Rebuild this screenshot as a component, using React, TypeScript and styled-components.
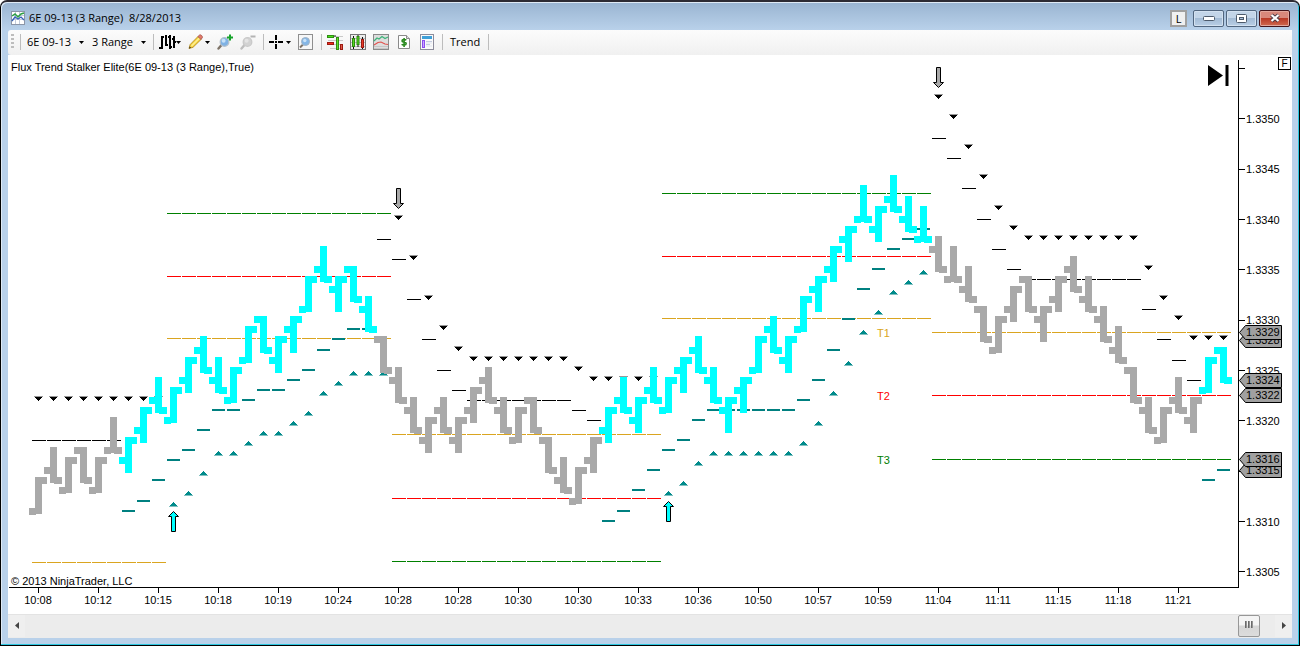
import React from 'react';
import styled, { createGlobalStyle, css } from 'styled-components';

const GlobalStyle = createGlobalStyle`
  * { box-sizing: border-box; }
  body { margin: 0; background: #fff; font-family: "Open Sans", "Segoe UI", sans-serif; }
`;

/* ---------- chart data: prices are ticks above 1.3300 ---------- */

type Bar = [open: number, high: number, close: number];

const RANGE = 3;
const STEP = 15;
const FIRST = 30;
const PLOT_W = 1230;
const PLOT_H = 533;

const BARS: Bar[] = [
  [11, 14, 14], [15, 17, 14], [13, 16, 16], [17, 17, 14], [13, 16, 16], [17, 20, 17], [16, 18, 18], [19, 21, 21],
  [22, 24, 21], [20, 23, 23], [24, 26, 26], [27, 28, 25], [24, 26, 23], [22, 25, 25], [26, 29, 29], [30, 30, 27],
  [26, 28, 28], [29, 30, 30], [31, 34, 34], [35, 37, 34], [33, 34, 34], [35, 35, 32], [31, 32, 29], [28, 28, 25],
  [24, 25, 22], [21, 22, 19], [18, 20, 20], [21, 22, 19], [18, 20, 20], [21, 23, 23], [24, 25, 22], [21, 22, 19],
  [18, 21, 21], [22, 22, 19], [18, 18, 15], [14, 16, 13], [12, 15, 15], [16, 18, 18], [19, 21, 21], [22, 24, 21],
  [20, 22, 22], [23, 25, 22], [21, 24, 24], [25, 26, 26], [27, 28, 25], [24, 25, 22], [21, 22, 22], [23, 24, 24],
  [25, 28, 28], [29, 30, 27], [26, 28, 28], [29, 32, 32], [33, 34, 34], [35, 37, 37], [38, 39, 39], [40, 43, 40],
  [39, 41, 41], [42, 44, 41], [40, 42, 39], [38, 41, 38], [37, 38, 35], [34, 37, 34], [33, 35, 32], [31, 31, 28],
  [27, 30, 30], [31, 33, 33], [34, 34, 31], [30, 31, 31], [32, 34, 34], [35, 36, 33], [32, 34, 31], [30, 31, 28],
  [27, 29, 26], [25, 25, 22], [21, 22, 19], [18, 21, 21], [22, 24, 21], [20, 22, 22], [23, 26, 26], [27, 27, 24],
];

const isUp = (i: number) => (i >= 6 && i <= 22) || (i >= 38 && i <= 59) || i >= 78;

type Run = { from: number; values: number[] };

const fill = (n: number, v: number): number[] => Array.from({ length: n }, () => v);

const SHORT_DASHES: Run[] = [
  { from: 0, values: fill(6, 18) },
  { from: 23, values: [38, 36, 32, 28, 25, 23, ...fill(7, 22), 21, 20] },
  { from: 60, values: [48, 46, 43, 40, 37, 35, ...fill(8, 34), 31, 28, 26, 24] },
];

const LONG_DASHES: Run[] = [
  { from: 6, values: [11, 12, 14, 16, 17, 19, 21, 21, 22, 23, 23, 24, 25, 27, 28, 29, 29] },
  { from: 38, values: [10, 11, 13, 15, 17, 18, 20, ...fill(6, 21), 22, 24, 27, 30, 33, 35, 37, 38, 39] },
  { from: 78, values: [14, 15] },
];

const DOWN_MARKS: Run[] = [
  { from: 0, values: fill(9, 22) },
  { from: 24, values: [40, 36, 32, 29, 27, ...fill(7, 26), 25, ...fill(5, 24)] },
  { from: 60, values: [52, 50, 47, 44, 41, 39, ...fill(8, 38), 35, 32, 30, 28, 28, 28] },
];

const UP_MARKS: Run[] = [
  { from: 9, values: [12, 13, 15, 17, 17, 18, 19, 19, 20, 21, 23, 24, 25, 25, 25] },
  { from: 42, values: [13, 14, 16, ...fill(6, 17), 18, 20, 23, 26, 29, 31, 33, 34, 35] },
];

const GOLD = '#daa520';
const RED = '#ff0000';
const GREEN = '#008000';

const LEVELS = [
  { from: 0, to: 8, y: 507, color: GOLD },
  { from: 9, to: 23, y: 158, color: GREEN },
  { from: 9, to: 23, y: 221, color: RED },
  { from: 9, to: 23, y: 283, color: GOLD },
  { from: 24, to: 41, y: 379, color: GOLD },
  { from: 24, to: 41, y: 443, color: RED },
  { from: 24, to: 41, y: 506, color: GREEN },
  { from: 42, to: 59, y: 138, color: GREEN },
  { from: 42, to: 59, y: 201, color: RED },
  { from: 42, to: 59, y: 263, color: GOLD },
  { from: 60, to: 79, y: 277, color: GOLD },
  { from: 60, to: 79, y: 340, color: RED },
  { from: 60, to: 79, y: 404, color: GREEN },
];

const TIMES = [
  '10:08', '10:12', '10:15', '10:18', '10:19', '10:24', '10:28', '10:28', '10:30', '10:30',
  '10:33', '10:36', '10:50', '10:57', '10:59', '11:04', '11:11', '11:15', '11:18', '11:21',
];

const PRICES = ['1.3350', '1.3345', '1.3340', '1.3335', '1.3330', '1.3325', '1.3320', '1.3315', '1.3310', '1.3305'];

const TAGS = [
  { price: '1.3328', y: 285 },
  { price: '1.3329', y: 277 },
  { price: '1.3324', y: 325 },
  { price: '1.3322', y: 340 },
  { price: '1.3315', y: 415 },
  { price: '1.3316', y: 404 },
];

const TARGETS = [
  { name: 'T1', y: 278, color: GOLD },
  { name: 'T2', y: 341, color: RED },
  { name: 'T3', y: 405, color: GREEN },
];

const xOf = (i: number) => FIRST + i * STEP;
const topOf = (t: number) => Math.round(60 + (50 - t) * 10.067);
const each = (runs: Run[], draw: (x: number, top: number, key: string) => React.ReactNode) =>
  runs.flatMap((r) => r.values.map((v, k) => draw(xOf(r.from + k), topOf(v), `${r.from + k}`)));

/* ---------- window frame ---------- */

const Frame = styled.main`
  min-height: 100vh;
  display: flex;
  flex-direction: column;
  padding: 0 7px 7px;
  border: 1px solid #000;
  border-top: 2px solid #2d2b33;
  border-radius: 7px 7px 0 0;
  background: linear-gradient(#99b4d1, #b9d1ea 28px);
  box-shadow: inset -1px -1px 0 #2cc7e0, inset 1px 1px 0 #dfeaf5;
`;

const TitleBar = styled.header`
  display: flex;
  align-items: center;
  height: 28px;
  padding: 4px 2px 0 3px;
`;

const Title = styled.h1`
  flex: 1;
  margin: 0 0 0 4px;
  font-size: 11px;
  line-height: 16px;
  font-weight: 400;
  white-space: pre;
  color: #000;
`;

const LinkButton = styled.button`
  width: 17px;
  height: 17px;
  margin-right: 4px;
  padding: 0;
  border: 2px solid #a0a0a0;
  background: #f0f0f0;
  color: #000;
  font: 11px/13px "Open Sans", sans-serif;
`;

const FrameButton = styled.button<{ $close?: boolean }>`
  display: flex;
  align-items: center;
  justify-content: center;
  width: 31px;
  height: 17px;
  margin-left: 2px;
  padding: 0;
  border: 1px solid ${(p) => (p.$close ? '#43141a' : '#51667f')};
  border-radius: 2px;
  box-shadow: inset 0 0 0 1px ${(p) => (p.$close ? '#e2a79c' : '#d3e1f0')};
  background: ${(p) =>
    p.$close
      ? 'linear-gradient(#d8887b 0 45%, #b93a26 50%, #cf6a50)'
      : 'linear-gradient(#c3d5e8 0 45%, #a3bbd5 50%, #b9cfe6)'};
`;

/* ---------- toolbar ---------- */

const Toolbar = styled.nav`
  display: flex;
  align-items: center;
  height: 25px;
  padding: 0 0 1px 3px;
  border-radius: 3px 0 0 3px;
  background: linear-gradient(#fcfcfc, #f0f0f0);
`;

const Grip = styled.span`
  width: 3px;
  height: 16px;
  margin-right: 6px;
  background: repeating-linear-gradient(#bdbdbd 0 2px, transparent 2px 4px);
`;

const Group = styled.div<{ $first?: boolean }>`
  display: flex;
  align-items: center;
  gap: 7px;
  height: 16px;
  padding: 0 7px 0 5px;
  border-right: 1px solid #bdbdbd;
  ${(p) => p.$first && css`
    gap: 8px;
    padding-left: 6px;
    border-left: 1px solid #bdbdbd;
  `}
`;

const Picker = styled.label`
  display: flex;
  align-items: center;
  gap: 6px;
`;

const PickerSelect = styled.select<{ $width: number }>`
  appearance: none;
  width: ${(p) => p.$width}px;
  height: 16px;
  padding: 0;
  border: 0;
  outline: 0;
  background: none;
  color: #000;
  font: 11px/16px "Open Sans", sans-serif;
`;

const Tool = styled.button`
  display: flex;
  align-items: center;
  padding: 0;
  border: 0;
  background: none;
  color: #000;
  font: 11px/16px "Open Sans", sans-serif;
`;

const TextTool = styled(Tool)`
  padding: 0 1px 0 2px;
`;

const Caret = () => (
  <svg width="5" height="3" viewBox="0 0 5 3" aria-hidden="true">
    <path d="M0 0h5L2.500 3z" fill="#000" />
  </svg>
);

/* ---------- chart ---------- */

const ChartArea = styled.section`
  position: relative;
  display: grid;
  grid-template-columns: 1fr 54px;
  grid-template-rows: auto 26px;
  flex: 1;
  background: #fff;
  color: #000;
  font: 11px/14px "Liberation Sans", Arial, sans-serif;
`;

const Plot = styled.div`
  position: relative;
  display: grid;
  min-width: 0;
  > * { grid-area: 1 / 1; }
`;

const PlotSvg = styled.svg`
  display: block;
  width: 100%;
  height: ${PLOT_H}px;
`;

const Caption = styled.p<{ $bottom?: boolean }>`
  margin: 0;
  padding: ${(p) => (p.$bottom ? '0 0 0 3px' : '5px 0 0 3px')};
  align-self: ${(p) => (p.$bottom ? 'end' : 'start')};
`;

const TargetLabel = styled.span<{ $y: number; $color: string }>`
  position: absolute;
  left: ${(869 / PLOT_W) * 100}%;
  top: ${(p) => p.$y - 7}px;
  color: ${(p) => p.$color};
`;

const PriceAxis = styled.aside`
  position: relative;
`;

const PriceLines = styled.svg`
  display: block;
`;

const PriceList = styled.ul`
  position: absolute;
  inset: 57px 0 9px 8px;
  display: flex;
  flex-direction: column;
  justify-content: space-between;
  margin: 0;
  padding: 0;
  list-style: none;
`;

const PriceTag = styled.div<{ $y: number }>`
  position: absolute;
  left: 1px;
  top: ${(p) => p.$y - 7}px;
  display: grid;
  width: 43px;
  height: 15px;
  > * { grid-area: 1 / 1; }
  > span { padding: 1px 0 0 7px; line-height: 13px; }
`;

const TimeAxis = styled.div`
  display: flex;
`;

const TimeCell = styled.span`
  flex: 60 1 0;
  display: flex;
  flex-direction: column;
  align-items: center;
  &::before { content: ""; width: 1px; height: 5px; background: #000; }
`;

const TimeRest = styled.span`
  flex: 30 1 0;
`;

const FixedButton = styled.button`
  position: absolute;
  top: 2px;
  right: 1px;
  width: 13px;
  height: 13px;
  padding: 0;
  border: 1px solid #000;
  background: #fff;
  color: #000;
  font: 10px/11px "Liberation Sans", Arial, sans-serif;
`;

const SkipButton = styled.button`
  position: absolute;
  top: 10px;
  right: 63px;
  padding: 0;
  border: 0;
  background: none;
  line-height: 0;
`;

/* ---------- scroll bar ---------- */

const ScrollBar = styled.footer`
  display: flex;
  align-items: flex-start;
  justify-content: space-between;
  height: 24px;
  border-top: 1px solid #e3e3e3;
  background: #ececec;
`;

const ScrollArrow = styled.button`
  display: flex;
  align-items: center;
  justify-content: center;
  width: 17px;
  height: 22px;
  padding: 0 0 1px;
  border: 0;
  background: #efefef;
`;

const ScrollEnd = styled.div`
  display: flex;
  gap: 15px;
`;

const Thumb = styled.button`
  display: flex;
  align-items: center;
  justify-content: center;
  gap: 1px;
  width: 22px;
  height: 22px;
  padding: 0 0 3px;
  border: 1px solid #979797;
  border-radius: 2px;
  background: linear-gradient(#f4f4f4 0 45%, #d6d6d6 50%, #dcdcdc);
`;

const Ridge = styled.i`
  width: 2px;
  height: 7px;
  background: linear-gradient(90deg, #555, #aaa);
`;

/* ---------- icons ---------- */

const TitleIcon = () => (
  <svg width="14" height="14" viewBox="0 0 14 14" aria-hidden="true">
    <rect x=".5" y=".5" width="13" height="13" fill="#fff" stroke="#8c96a8" />
    <path d="M4.500 1v12M8.500 1v12M1 4.500h12M1 8.500h12" stroke="#c3ccdd" />
    <path d="M1 10l3-4 3 2 3-2 3 3" fill="none" stroke="#3a62b8" strokeWidth="1.300" />
    <path d="M1 5l3-2 3 3 3-3 3-1" fill="none" stroke="#2da043" strokeWidth="1.500" />
  </svg>
);

const BarsIcon = () => (
  <svg width="17" height="16" viewBox="1 0 17 16" shapeRendering="crispEdges" aria-hidden="true">
    <path d="M3 2h2v13H3zM1 13h2v2H1zM5 2h1v2H5zM7 1h2v11H7zM9 10h1v2H9zM11 1h2v14h-2zM10 2h1v2h-1zM13 12h1v2h-1zM15 2h2v12h-2zM14 4h1v2h-1zM17 7h1v2h-1z" fill="#000" />
  </svg>
);

const PencilIcon = () => (
  <svg width="17" height="16" viewBox="0 0 17 16" aria-hidden="true">
    <path d="M1 14.500l1.200-4L10 2.500l3 3L5 13.300z" fill="#f7d644" stroke="#b58a1c" strokeWidth=".9" />
    <path d="M3.500 12L11.500 4" stroke="#fdf09a" strokeWidth="1.200" />
    <path d="M10 2.500l1.600-1.500q1-.5 2 .5t.8 2L13 5.500z" fill="#e27a6c" stroke="#a24f45" strokeWidth=".8" />
    <path d="M1 14.500l.7-2 1.400 1.300z" fill="#333" />
  </svg>
);

const ZoomIcon = ({ minus }: { minus?: boolean }) => (
  <svg width="16" height="16" viewBox="0 0 16 16" aria-hidden="true">
    <path d="M4.500 11L1.500 14.500" stroke={minus ? '#bdbdbd' : '#7f7468'} strokeWidth="2.400" strokeLinecap="round" />
    <circle cx="7.500" cy="8" r="4.300" fill={minus ? '#d2d2d2' : '#7fb2e4'} stroke={minus ? '#c9c9c9' : '#b3c0cd'} strokeWidth="1.300" />
    <circle cx="6.600" cy="6.800" r="2" fill={minus ? '#e4e4e4' : '#c6e1f8'} />
    {minus ? <path d="M10.500 2.500h5" stroke="#b4b4b4" strokeWidth="2" /> : <path d="M10 3.500h6M13 .5v6" stroke="#16a32a" strokeWidth="2" />}
  </svg>
);

const CrossIcon = () => (
  <svg width="17" height="16" viewBox="2 0 17 16" shapeRendering="crispEdges" aria-hidden="true">
    <path d="M8 1h2v5H8zM8 10h2v5H8zM2 7h5v2H2zM11 7h5v2h-5zM8 7h2v2H8z" fill="#000" />
  </svg>
);

const ZoomBoxIcon = () => (
  <svg width="16" height="16" viewBox="1 0 16 16" aria-hidden="true">
    <rect x="1.500" y=".5" width="14" height="15" fill="#f7f7f7" stroke="#8f8f8f" />
    <path d="M6 10.500L3 13.500" stroke="#7f7468" strokeWidth="2" />
    <circle cx="8.500" cy="7.500" r="4" fill="#84b6e6" stroke="#a0b3c6" />
    <circle cx="7.800" cy="6.500" r="1.700" fill="#c8e2f8" />
  </svg>
);

const DepthIcon = () => (
  <svg width="16" height="16" viewBox="1 0 16 16" aria-hidden="true">
    <path d="M2 2.500h15M2 6.500h15M2 10.500h15M4 14.500h12" stroke="#c9c9c9" />
    <rect x="1.500" y="1.500" width="6" height="2" fill="#4be01c" stroke="#2f8f12" />
    <rect x="1.500" y="8.500" width="6" height="2" fill="#f02c1c" stroke="#9c1a10" />
    <path d="M8 2h2" stroke="#222" />
    <rect x="10.500" y="3.500" width="2" height="12" fill="#5be02c" stroke="#2f8f12" />
    <rect x="14.500" y="10.500" width="2" height="5" fill="#e05848" stroke="#9c1a10" />
  </svg>
);

const CandlesIcon = () => (
  <svg width="16" height="16" viewBox="1 0 16 16" aria-hidden="true">
    <rect x="1.500" y=".5" width="15" height="15" fill="#ececec" stroke="#777" />
    <path d="M2 4.500h14M2 8.500h14M2 12.500h14" stroke="#bbb" />
    <path d="M4.500 2v13M9 1v12M13.500 3v12" stroke="#111" />
    <rect x="3.500" y="4.500" width="2" height="8" fill="#55d81e" stroke="#2d8a10" />
    <rect x="8" y="2.500" width="2" height="8" fill="#55d81e" stroke="#2d8a10" />
    <rect x="12.500" y="5.500" width="2" height="8" fill="#e83a28" stroke="#9c1a10" />
  </svg>
);

const LinesIcon = () => (
  <svg width="16" height="16" viewBox="1 0 16 16" aria-hidden="true">
    <rect x="1.500" y=".5" width="15" height="15" fill="#dedede" stroke="#8a8a8a" />
    <path d="M2 12.500h14M2 14.500h14" stroke="#c6c6c6" />
    <path d="M2 7l3-3 2 1 3-2.500 3 2 3-1.500" fill="none" stroke="#3db57a" strokeWidth="1.200" />
    <path d="M2 11l4-2.500 3-.5 4 2 3 .5" fill="none" stroke="#e2524d" strokeWidth="1.200" />
  </svg>
);

const DollarIcon = () => (
  <svg width="16" height="16" viewBox="1 0 16 16" aria-hidden="true">
    <path d="M3.500 1.500h8l3 3v10h-11z" fill="#fff" stroke="#8a8a8a" />
    <path d="M11.500 1.500v3h3" fill="#ddd" stroke="#8a8a8a" />
    <path d="M11.300 6.200C10.500 5.300 7 5 7 6.900 7 8.600 11.200 7.600 11.200 9.600 11.200 11.600 7.500 11.300 6.700 10.300M9.100 4v9" fill="none" stroke="#2a8a1e" strokeWidth="1.600" />
  </svg>
);

const PanelIcon = () => (
  <svg width="16" height="16" viewBox="1 0 16 16" aria-hidden="true">
    <rect x="2.500" y=".5" width="13" height="15" fill="#fafafa" stroke="#8d8d9c" />
    <rect x="4" y="2" width="10" height="3" fill="#3fa0d8" />
    <rect x="4.500" y="6.500" width="2" height="7" fill="#c9a4ff" stroke="#8a4df0" />
    <path d="M8 7.500h6M8 10.500h4" stroke="#c3cbe0" />
    <path d="M8 9h6M8 12h6" stroke="#e0e5f0" />
  </svg>
);

const DownArrow = ({ x, y }: { x: number; y: number }) => (
  <path
    d={`M${x - 1.5} ${y + 0.5}h4v15h3L${x + 0.5} ${y + 20.500}l-5 -5h3z`}
    fill="#a9a9a9"
    stroke="#000"
    strokeWidth="1"
  />
);

const UpArrow = ({ x, y }: { x: number; y: number }) => (
  <path
    d={`M${x - 1.5} ${y + 20.500}h4v-15h3L${x + 0.5} ${y + 0.5}l-5 5h3z`}
    fill="#00ffff"
    stroke="#000"
    strokeWidth="1"
  />
);

/* ---------- parts ---------- */

const PricePlot = () => (
  <PlotSvg viewBox={`0 0 ${PLOT_W} ${PLOT_H}`} preserveAspectRatio="none" role="img" aria-label="Price chart">
    <g shapeRendering="crispEdges">
      {LEVELS.map((l) =>
        Array.from({ length: l.to - l.from + 1 }, (_, k) => (
          <rect key={`${l.y}-${l.from}-${k}`} x={xOf(l.from + k) - 6} y={l.y} width="14" height="1" fill={l.color} />
        )),
      )}
      {each(SHORT_DASHES, (x, top, key) => <rect key={`s${key}`} x={x - 6} y={top + 3} width="14" height="1" fill="#000" />)}
      {each(LONG_DASHES, (x, top, key) => <rect key={`l${key}`} x={x - 6} y={top + 2} width="13" height="2" fill="#008080" />)}
      {each(DOWN_MARKS, (x, top, key) => (
        <g key={`d${key}`}>
          <rect x={x - 4} y={top - 1} width="9" height="1" fill="#999" />
          <path d={`M${x - 3} ${top}h7v1h-1v1h-1v1h-1v1h-1v-1h-1v-1h-1v-1h-1z`} fill="#000" />
        </g>
      ))}
      {each(UP_MARKS, (x, top, key) => (
        <g key={`u${key}`}>
          <rect x={x - 4} y={top + 8} width="9" height="1" fill="#80c0c0" />
          <path d={`M${x - 3} ${top + 8}h7v-1h-1v-1h-1v-1h-1v-1h-1v1h-1v1h-1v1h-1z`} fill="#008b8b" />
        </g>
      ))}
      {BARS.map(([open, high, close], i) => {
        const x = xOf(i);
        const top = topOf(high);
        return (
          <g key={i} fill={isUp(i) ? '#00ffff' : '#a9a9a9'}>
            <rect x={x - 3} y={top} width="7" height={topOf(high - RANGE) + 6 - top} />
            <rect x={x - 9} y={topOf(open)} width="7" height="7" />
            <rect x={x + 1} y={topOf(close)} width="8" height="7" />
          </g>
        );
      })}
      <rect x="1" y="532" width="1229" height="1" fill="#000" />
    </g>
    <DownArrow x={390} y={133} />
    <DownArrow x={930} y={12} />
    <UpArrow x={165} y={456} />
    <UpArrow x={660} y={446} />
  </PlotSvg>
);

const PriceScale = () => (
  <PriceAxis>
    <PriceLines width="54" height={PLOT_H} shapeRendering="crispEdges" aria-hidden="true">
      <rect x="0" y="5" width="1" height="528" />
      {Array.from({ length: 11 }, (_, k) => (
        <rect key={k} x="0" y={Math.round(13 + k * 50.333)} width="7" height="1" />
      ))}
    </PriceLines>
    <PriceList>
      {PRICES.map((p) => <li key={p}>{p}</li>)}
    </PriceList>
    {TAGS.map((t) => (
      <PriceTag key={t.price} $y={t.y}>
        <svg width="43" height="15" viewBox="0 0 43 15" aria-hidden="true">
          <path d="M.5 7.500L6.500 .5H42.500V14.500H6.500z" fill="#a0a0a0" stroke="#000" />
        </svg>
        <span>{t.price}</span>
      </PriceTag>
    ))}
  </PriceAxis>
);

export default function App() {
  return (
    <>
      <GlobalStyle />
      <Frame>
        <TitleBar>
          <TitleIcon />
          <Title>{'6E 09-13 (3 Range)  8/28/2013'}</Title>
          <LinkButton>L</LinkButton>
          <FrameButton aria-label="Minimize">
            <svg width="12" height="6"><rect x=".5" y="1.500" width="11" height="4" rx="1" fill="#fff" stroke="#4d5a6b" /></svg>
          </FrameButton>
          <FrameButton aria-label="Maximize">
            <svg width="11" height="9">
              <rect x=".5" y=".5" width="10" height="8" rx="1" fill="#fff" stroke="#4d5a6b" />
              <rect x="3.500" y="3.500" width="4" height="2" fill="#a9c0da" stroke="#4d5a6b" />
            </svg>
          </FrameButton>
          <FrameButton $close aria-label="Close">
            <svg width="12" height="10" viewBox="0 0 12 10">
              <path d="M2.500 2l7 6M9.500 2l-7 6" stroke="#4d3a44" strokeWidth="4" />
              <path d="M2.500 2l7 6M9.500 2l-7 6" stroke="#fff" strokeWidth="2.200" />
            </svg>
          </FrameButton>
        </TitleBar>

        <Toolbar>
          <Grip />
          <Group $first>
            <Picker>
              <PickerSelect $width={46} aria-label="Instrument"><option>6E 09-13</option></PickerSelect>
              <Caret />
            </Picker>
            <Picker>
              <PickerSelect $width={43} aria-label="Period"><option>3 Range</option></PickerSelect>
              <Caret />
            </Picker>
          </Group>
          <Group>
            <Tool aria-label="Chart style"><BarsIcon /><Caret /></Tool>
            <Tool aria-label="Drawing tools"><PencilIcon /><Caret /></Tool>
            <Tool aria-label="Zoom in"><ZoomIcon /></Tool>
            <Tool aria-label="Zoom out"><ZoomIcon minus /></Tool>
          </Group>
          <Group>
            <Tool aria-label="Cursor"><CrossIcon /><Caret /></Tool>
            <Tool aria-label="Zoom frame"><ZoomBoxIcon /></Tool>
          </Group>
          <Group>
            <Tool aria-label="Chart trader"><DepthIcon /></Tool>
            <Tool aria-label="Data series"><CandlesIcon /></Tool>
            <Tool aria-label="Indicators"><LinesIcon /></Tool>
            <Tool aria-label="Strategies"><DollarIcon /></Tool>
            <Tool aria-label="Properties"><PanelIcon /></Tool>
          </Group>
          <Group>
            <TextTool>Trend</TextTool>
          </Group>
        </Toolbar>

        <ChartArea>
          <Plot>
            <PricePlot />
            <Caption>Flux Trend Stalker Elite(6E 09-13 (3 Range),True)</Caption>
            <Caption $bottom>© 2013 NinjaTrader, LLC</Caption>
            {TARGETS.map((t) => (
              <TargetLabel key={t.name} $y={t.y} $color={t.color}>{t.name}</TargetLabel>
            ))}
          </Plot>
          <PriceScale />
          <TimeAxis>
            {TIMES.map((t, i) => <TimeCell key={i}>{t}</TimeCell>)}
            <TimeRest />
          </TimeAxis>
          <SkipButton aria-label="Jump to last bar">
            <svg width="21" height="21" viewBox="0 0 21 21"><path d="M0 0L15 10.500 0 21zM17.500 0h3v21h-3z" fill="#000" /></svg>
          </SkipButton>
          <FixedButton>F</FixedButton>
        </ChartArea>

        <ScrollBar>
          <ScrollArrow aria-label="Scroll left">
            <svg width="4" height="7"><path d="M4 0v7L0 3.500z" fill="#444" /></svg>
          </ScrollArrow>
          <ScrollEnd>
            <Thumb aria-label="Scroll thumb"><Ridge /><Ridge /><Ridge /></Thumb>
            <ScrollArrow aria-label="Scroll right">
              <svg width="4" height="7"><path d="M0 0v7l4-3.500z" fill="#444" /></svg>
            </ScrollArrow>
          </ScrollEnd>
        </ScrollBar>
      </Frame>
    </>
  );
}
